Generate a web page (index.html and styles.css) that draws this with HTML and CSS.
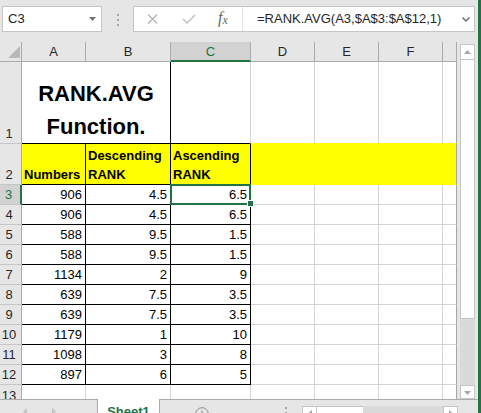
FILE: index.html
```html
<!DOCTYPE html>
<html>
<head>
<meta charset="utf-8">
<link rel="stylesheet" href="styles.css">
</head>
<body>
<div class="window">
  <div class="excel">
    <div class="fbar">
      <div class="namebox"><span class="ref">C3</span><svg width="7" height="4" viewBox="0 0 7 4"><path d="M0 0H7L3.5 4Z" fill="#707070"/></svg></div>
      <div class="grip"><i></i><i></i><i></i></div>
      <div class="fbox">
        <div class="fbtns">
          <svg width="11" height="10" viewBox="0 0 11 10"><path d="M1 0.5L10 9.5M10 0.5L1 9.5" stroke="#b3b3b3" stroke-width="1.3" fill="none"/></svg>
          <svg class="ok" width="14" height="10" viewBox="0 0 14 10"><path d="M1 5L5 9L13 1" stroke="#c4c4c4" stroke-width="1.6" fill="none"/></svg>
          <span class="fx">f<span class="fxx">x</span></span>
        </div>
        <div class="finput">=RANK.AVG(A3,$A$3:$A$12,1)</div>
        <svg class="chev" width="8" height="5" viewBox="0 0 8 5"><path d="M0.5 0.5L4 4L7.5 0.5" stroke="#707070" stroke-width="1.5" fill="none"/></svg>
      </div>
    </div>

    <div class="pane">
      <div class="grid">
        <div class="cn"><svg width="12" height="12" viewBox="0 0 12 12"><path d="M12 0V12H0Z" fill="#b9b9b9"/></svg></div>
        <div class="hd">A</div><div class="hd">B</div><div class="hd hs">C</div><div class="hd">D</div><div class="hd">E</div><div class="hd">F</div><div class="hd"></div>

        <div class="rh">1</div>
        <div class="title span2 b">RANK.AVG<br>Function.</div>
        <div class="bb"></div><div class="yb"></div><div class="yb"></div><div class="yb"></div><div class="yb pe"></div>

        <div class="rh">2</div>
        <div class="hx fill b">Numbers</div>
        <div class="hx fill b">Descending RANK</div>
        <div class="hx fill b">Ascending RANK</div>
        <div class="fill yb yr"></div><div class="fill yb yr"></div><div class="fill yb yr"></div><div class="fill yb pe"></div>

        <div class="rh rs">3</div>
        <div class="n b">906</div><div class="n b">4.5</div><div class="n b cur">6.5<span class="selbox"><i class="handle"></i></span></div>
        <div></div><div></div><div></div><div class="pe"></div>

        <div class="rh">4</div>
        <div class="n b">906</div><div class="n b">4.5</div><div class="n b">6.5</div>
        <div></div><div></div><div></div><div class="pe"></div>

        <div class="rh">5</div>
        <div class="n b">588</div><div class="n b">9.5</div><div class="n b">1.5</div>
        <div></div><div></div><div></div><div class="pe"></div>

        <div class="rh">6</div>
        <div class="n b">588</div><div class="n b">9.5</div><div class="n b">1.5</div>
        <div></div><div></div><div></div><div class="pe"></div>

        <div class="rh">7</div>
        <div class="n b">1134</div><div class="n b">2</div><div class="n b">9</div>
        <div></div><div></div><div></div><div class="pe"></div>

        <div class="rh">8</div>
        <div class="n b">639</div><div class="n b">7.5</div><div class="n b">3.5</div>
        <div></div><div></div><div></div><div class="pe"></div>

        <div class="rh">9</div>
        <div class="n b">639</div><div class="n b">7.5</div><div class="n b">3.5</div>
        <div></div><div></div><div></div><div class="pe"></div>

        <div class="rh">10</div>
        <div class="n b">1179</div><div class="n b">1</div><div class="n b">10</div>
        <div></div><div></div><div></div><div class="pe"></div>

        <div class="rh">11</div>
        <div class="n b">1098</div><div class="n b">3</div><div class="n b">8</div>
        <div></div><div></div><div></div><div class="pe"></div>

        <div class="rh">12</div>
        <div class="n b">897</div><div class="n b">6</div><div class="n b">5</div>
        <div></div><div></div><div></div><div class="pe"></div>

        <div class="rh r13">13</div>
        <div class="e13"></div><div class="e13"></div><div class="e13"></div><div class="e13"></div><div class="e13"></div><div class="e13"></div><div class="e13 pe"></div>
      </div>
      <div class="vside">
        <div class="vscroll">
          <div class="vup"><svg width="7" height="4" viewBox="0 0 7 4"><path d="M0 4H7L3.5 0Z" fill="#a6a6a6"/></svg></div>
          <div class="vthumb"></div>
          <div class="vtrack"></div>
          <div class="vdn"><svg width="7" height="4" viewBox="0 0 7 4"><path d="M0 0H7L3.5 4Z" fill="#a6a6a6"/></svg></div>
        </div>
      </div>
    </div>

    <div class="tabbar">
      <div class="nav">
        <svg width="4" height="7" viewBox="0 0 4 7"><path d="M4 0V7L0 3.5Z" fill="#c4c4c4"/></svg>
        <svg class="nr" width="4" height="7" viewBox="0 0 4 7"><path d="M0 0V7L4 3.5Z" fill="#c4c4c4"/></svg>
      </div>
      <div class="tab">Sheet1</div>
      <div class="rest">
        <svg class="plus" width="14" height="14" viewBox="0 0 14 14"><circle cx="7" cy="7" r="6.3" stroke="#8a8a8a" stroke-width="1" fill="none"/><path d="M7 3.5V10.5M3.5 7H10.5" stroke="#8a8a8a" stroke-width="1"/></svg>
        <div class="dots"><i></i><i></i></div>
        <div class="hscroll">
          <div class="hl"><svg width="4" height="7" viewBox="0 0 4 7"><path d="M4 0V7L0 3.5Z" fill="#a6a6a6"/></svg></div>
          <div class="hthumb"></div>
          <div class="htrack"></div>
          <div class="hr"><svg width="4" height="7" viewBox="0 0 4 7"><path d="M0 0V7L4 3.5Z" fill="#a6a6a6"/></svg></div>
        </div>
      </div>
    </div>
  </div>
  <div class="edge"></div>
</div>
</body>
</html>
```
FILE: styles.css
```css
* { box-sizing: border-box; }
html, body { margin: 0; padding: 0; }
body {
  width: 481px; height: 413px; overflow: hidden;
  background: #e6e6e6;
  font-family: "Liberation Sans", Arial, sans-serif;
  font-size: 13px; color: #222;
}
.window { display: flex; height: 413px; }
.excel { width: 478px; display: flex; flex-direction: column; }
.edge { width: 3px; background: #217346; }

/* formula bar */
.fbar { height: 42px; display: flex; align-items: flex-start; padding: 6px 0 0 2px; flex: none; }
.namebox {
  width: 100px; height: 26px; background: #fff; border: 1px solid #c6c6c6;
  display: flex; align-items: center; padding: 0 5px; line-height: 24px; color: #222;
}
.namebox .ref { flex: 1; }
.grip { margin: 8px 0 0 15px; width: 2px; display: flex; flex-direction: column; gap: 3px; }
.grip i { display: block; width: 2px; height: 2px; background: #a6a6a6; }
.fbox {
  margin-left: 14px; width: 342px; height: 26px; background: #fff; border: 1px solid #c6c6c6;
  display: flex; align-items: center;
}
.fbtns {
  width: 109px; height: 100%; display: flex; align-items: center;
  padding-left: 13px; border-right: 1px solid #e4e4e4;
}
.fbtns .ok { margin-left: 24px; }
.fx {
  margin-left: 22px; font-family: "Liberation Serif", serif; font-style: italic;
  font-size: 16px; color: #666; line-height: 24px;
}
.fxx { font-size: 12px; vertical-align: -1px; }
.finput { flex: 1; padding-left: 14px; line-height: 24px; color: #262626; white-space: nowrap; }
.chev { margin-right: 4px; }

/* sheet pane */
.pane { display: flex; height: 357px; flex: none; }
.grid {
  width: 457px; display: grid;
  grid-template-columns: 22px 64px 85px 80px 64px 64px 64px 14px;
  grid-template-rows: 20px 82px 41px repeat(10, 20px) 14px;
  background: #fff;
}
.grid > * {
  border-right: 1px solid #d4d4d4; border-bottom: 1px solid #d4d4d4;
  display: flex; align-items: flex-end; line-height: 15px;
  padding: 0 3px 2px; white-space: nowrap; min-width: 0; color: #000;
}
.cn {
  background: #e6e6e6; border-right-color: #ababab; border-bottom-color: #ababab;
  justify-content: flex-end; padding: 0 1px 3px 0;
}
.hd {
  background: #e6e6e6; border-right-color: #ababab; border-bottom-color: #ababab;
  justify-content: center; align-items: center; padding: 0; color: #262626;
}
.hs { background: #d2d2d2; color: #217346; border-bottom: 2px solid #217346; }
.rh {
  background: #e6e6e6; border-right-color: #ababab; border-bottom-color: #c6c6c6;
  justify-content: center; padding: 0 3px 2px 0; color: #262626;
}
.rs { background: #d2d2d2; color: #217346; border-right: 2px solid #217346; }
.r13 { border-bottom: 0; align-items: flex-start; padding-top: 3px; overflow: hidden; }
.e13 { border-bottom: 0; }
.n { justify-content: flex-end; }
.b { border-right-color: #000; border-bottom-color: #000; }
.bb { border-bottom-color: #000; }
.fill { background: #ffff00; }
.yb { border-bottom-color: #ffff00; }
.yr { border-right-color: #ffff00; }
.pe { border-right-color: #a6a6a6; }
.span2 { grid-column: span 2; }
.title {
  justify-content: center; text-align: center; font-weight: bold;
  font-size: 22px; line-height: 33px; padding: 0; white-space: normal;
}
.hx { font-weight: bold; white-space: normal; line-height: 19px; padding: 0 2px; }
.cur { position: relative; }
.selbox {
  position: absolute; left: -1px; top: -1px; width: 81px; height: 21px;
  border: 2px solid #217346;
}
.handle {
  position: absolute; left: 75px; top: 14px; width: 7px; height: 7px;
  background: #217346; border: 1px solid #fff;
}

/* vertical scrollbar */
.vside { width: 21px; padding: 2px 0 0 3px; }
.vscroll { width: 15px; height: 355px; display: flex; flex-direction: column; }
.vup {
  height: 16px; background: #fff; border: 1px solid #c6c6c6;
  display: flex; align-items: center; justify-content: center; flex: none;
}
.vthumb { height: 259px; background: #fff; border: 1px solid #c6c6c6; border-top: 0; flex: none; }
.vtrack { flex: 1; background: #dadada; }
.vdn {
  height: 14px; background: #fff; border: 1px solid #c6c6c6; flex: none;
  display: flex; justify-content: center; padding-top: 5px;
}

/* sheet tabs */
.tabbar { height: 14px; display: flex; overflow: hidden; flex: none; }
.nav { width: 97px; border-top: 1px solid #ababab; display: flex; align-items: flex-start; padding: 8px 0 0 23px; }
.nav .nr { margin-left: 25px; }
.tab {
  width: 63px; background: #fff; border-left: 1px solid #ababab; border-right: 1px solid #ababab;
  color: #217346; font-weight: bold; text-align: center; padding-top: 5px; line-height: 15px;
}
.rest { flex: 1; border-top: 1px solid #ababab; display: flex; align-items: flex-start; }
.plus { margin: 7px 0 0 35px; flex: none; }
.dots { margin: 7px 0 0 76px; width: 2px; display: flex; flex-direction: column; gap: 3px; }
.dots i { display: block; width: 2px; height: 2px; background: #a6a6a6; }
.hscroll { margin: 6px 0 0 15px; display: flex; height: 20px; }
.hl, .hr {
  width: 15px; background: #fff; border: 1px solid #c6c6c6;
  display: flex; justify-content: center; padding-top: 3px;
}
.hthumb { width: 46px; background: #fff; border-top: 1px solid #c6c6c6; }
.htrack { width: 80px; background: #dadada; }
```
